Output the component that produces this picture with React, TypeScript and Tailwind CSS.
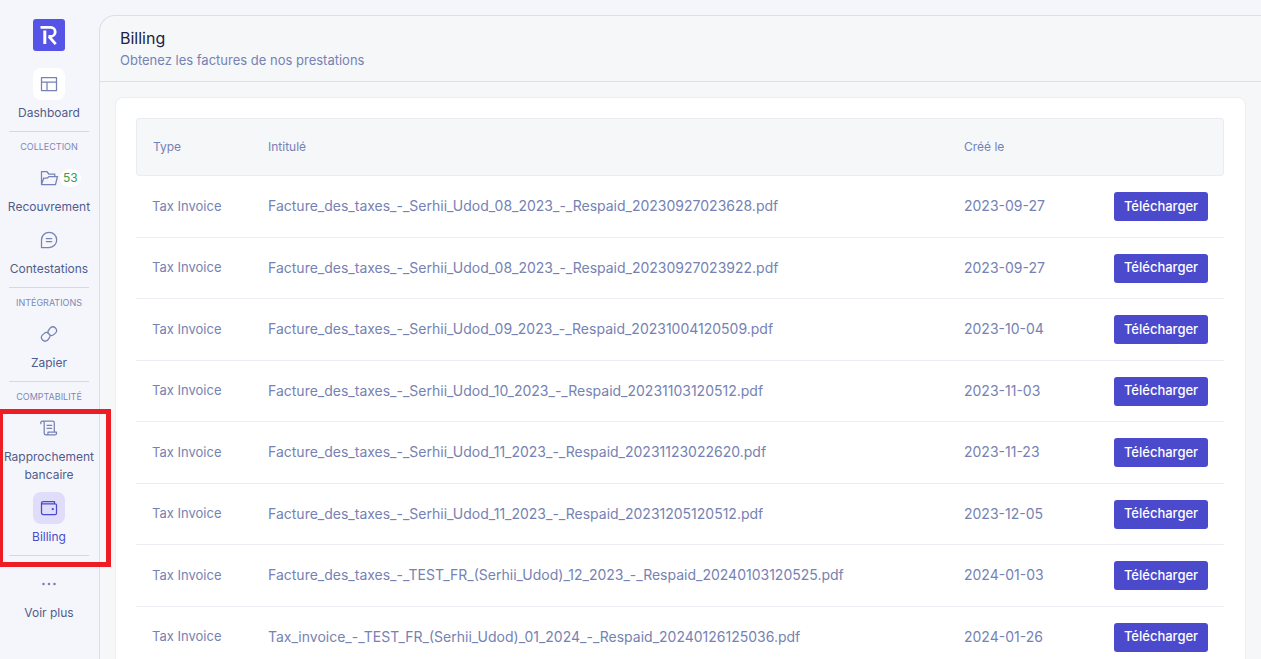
import type { ReactNode } from "react";

const invoices = [
  { type: "Tax Invoice", title: "Facture_des_taxes_-_Serhii_Udod_08_2023_-_Respaid_20230927023628.pdf", date: "2023-09-27" },
  { type: "Tax Invoice", title: "Facture_des_taxes_-_Serhii_Udod_08_2023_-_Respaid_20230927023922.pdf", date: "2023-09-27" },
  { type: "Tax Invoice", title: "Facture_des_taxes_-_Serhii_Udod_09_2023_-_Respaid_20231004120509.pdf", date: "2023-10-04" },
  { type: "Tax Invoice", title: "Facture_des_taxes_-_Serhii_Udod_10_2023_-_Respaid_20231103120512.pdf", date: "2023-11-03" },
  { type: "Tax Invoice", title: "Facture_des_taxes_-_Serhii_Udod_11_2023_-_Respaid_20231123022620.pdf", date: "2023-11-23" },
  { type: "Tax Invoice", title: "Facture_des_taxes_-_Serhii_Udod_11_2023_-_Respaid_20231205120512.pdf", date: "2023-12-05" },
  { type: "Tax Invoice", title: "Facture_des_taxes_-_TEST_FR_(Serhii_Udod)_12_2023_-_Respaid_20240103120525.pdf", date: "2024-01-03" },
  { type: "Tax Invoice", title: "Tax_invoice_-_TEST_FR_(Serhii_Udod)_01_2024_-_Respaid_20240126125036.pdf", date: "2024-01-26" },
];

function Icon({ children }: { children: ReactNode }) {
  return (
    <svg
      className="size-5 shrink-0"
      viewBox="0 0 20 20"
      fill="none"
      stroke="currentColor"
      strokeWidth="1.25"
      strokeLinecap="round"
      strokeLinejoin="round"
      aria-hidden="true"
    >
      {children}
    </svg>
  );
}

const LayoutIcon = () => (
  <Icon>
    <path d="M2.5 3.5h15v13h-15zM2.5 8h15M8 8v8.500" />
  </Icon>
);

const FolderIcon = () => (
  <Icon>
    <path d="M2.500 16.500v-13h5.300l2 2.500h6v2.500M2.500 16.500l2.200-6.500h3.600l1.800-1.500h8.400l-2 8z" />
  </Icon>
);

const ChatIcon = () => (
  <Icon>
    <path d="M2.500 17.500v-7.600a7.600 7.600 0 1 1 7.600 7.600zM7.300 8.600h5.400M7.300 11.500h5.400" />
  </Icon>
);

const LinkIcon = () => (
  <Icon>
    <path d="M8.800 9C8.800 7.500 9.200 6.500 10.100 5.500L11.500 3.700a3.700 3.700 0 0 1 5.200 5.200L15 10.400a3.600 3.600 0 0 1-5 0" />
    <path d="M11.200 11C11.200 12.500 10.800 13.500 9.900 14.500L8.500 16.300a3.700 3.700 0 0 1-5.200-5.200L5 9.600a3.600 3.600 0 0 1 5 0" />
  </Icon>
);

const ScrollIcon = () => (
  <Icon>
    <path d="M1.800 5.700v-1a1.700 1.700 0 0 1 3.400 0v10.600a1.600 1.600 0 0 0 1.600 1.600h9.200a1.500 1.500 0 0 0 1.500-1.500v-1.200H9v1.100a1.600 1.600 0 0 1-2 1.600M3.500 3h10.200a1.600 1.600 0 0 1 1.600 1.600v9.600M8 7.300h4.700M8 10.300h4.700" />
  </Icon>
);

const WalletIcon = () => (
  <Icon>
    <path d="M15.500 5.800V3.500H4.200a1.700 1.700 0 0 0-1.700 1.700v9.600a1.700 1.700 0 0 0 1.700 1.700h12a1.300 1.300 0 0 0 1.300-1.300V7.100a1.300 1.300 0 0 0-1.300-1.300H3.200" />
    <circle cx="13.800" cy="11" r=".5" fill="currentColor" />
  </Icon>
);

const DotsIcon = () => (
  <Icon>
    <g fill="currentColor" stroke="none">
      <circle cx="4.500" cy="10" r="1.300" />
      <circle cx="10" cy="10" r="1.300" />
      <circle cx="15.500" cy="10" r="1.300" />
    </g>
  </Icon>
);

function Logo() {
  return (
    <a href="#" aria-label="Respaid" className="block size-8 overflow-hidden rounded-[3px]">
      <svg viewBox="0 0 32 32" className="size-8" aria-hidden="true">
        <rect width="32" height="32" fill="#5654e6" />
        <g fill="none" stroke="#fff" strokeWidth="2.800">
          <path d="M7.500 8.400h10.200a4.500 4.500 0 0 1 0 9h-2.200" />
          <path d="M11.800 11.500V25" strokeWidth="3" />
          <path d="M16 17.500l6.700 7.600" />
        </g>
      </svg>
    </a>
  );
}

type NavItemProps = {
  icon: ReactNode;
  label: string;
  tile?: string;
  active?: boolean;
  badge?: string;
};

function NavItem({ icon, label, tile = "", active = false, badge }: NavItemProps) {
  return (
    <a
      href="#"
      aria-current={active ? "page" : undefined}
      className={`flex w-full flex-col items-center gap-1 text-center text-[12px] leading-[18px] ${active ? "text-[#4a4acb]" : "text-[#515c8c]"}`}
    >
      <span className={`relative flex size-8 items-center justify-center rounded-lg ${active ? "" : "text-[#7582b3]"} ${tile}`}>
        {icon}
        {badge && (
          <span className="absolute left-[27px] top-[7px] rounded-full bg-white px-[3px] text-[12px] leading-[18px] text-[#3c9a45]">
            {badge}
          </span>
        )}
      </span>
      <span>{label}</span>
    </a>
  );
}

function Section({ title, children }: { title?: string; children: ReactNode }) {
  return (
    <div className="mt-[9px] w-full">
      <hr className="mx-[9px] border-[#d5d8e0]" />
      {title ? (
        <h2 className="flex h-[30px] items-center justify-center text-[9px] text-[#7c88b8]">{title}</h2>
      ) : (
        <div className="h-3" />
      )}
      <div className="flex flex-col items-center gap-2">{children}</div>
    </div>
  );
}

function Sidebar() {
  return (
    <nav aria-label="Menu principal" className="relative z-10 flex w-[98px] shrink-0 flex-col items-center pt-[19px]">
      <Logo />
      <div className="mt-[17px] w-full">
        <NavItem icon={<LayoutIcon />} label="Dashboard" tile="bg-white" />
      </div>
      <Section title="COLLECTION">
        <NavItem icon={<FolderIcon />} label="Recouvrement" badge="53" />
        <NavItem icon={<ChatIcon />} label="Contestations" />
      </Section>
      <Section title="INTÉGRATIONS">
        <NavItem icon={<LinkIcon />} label="Zapier" />
      </Section>
      <Section title="COMPTABILITÉ">
        <NavItem icon={<ScrollIcon />} label="Rapprochement bancaire" />
        <NavItem icon={<WalletIcon />} label="Billing" tile="bg-[#e0ddfa]" active />
      </Section>
      <Section>
        <NavItem icon={<DotsIcon />} label="Voir plus" />
      </Section>
      <div className="pointer-events-none absolute -left-0.5 top-[409px] h-[158px] w-[113px] border-[5px] border-[#ee1c25]" />
    </nav>
  );
}

function InvoiceTable() {
  return (
    <table className="w-full table-fixed border-separate border-spacing-0 text-left text-[#7582b3]">
      <colgroup>
        <col className="w-[116px]" />
        <col />
        <col className="w-[150px]" />
        <col className="w-[126px]" />
      </colgroup>
      <thead>
        <tr className="h-[58px] text-[12px] [&>th]:border-y [&>th]:border-[#e9ecf1] [&>th]:bg-[#f6f7f9] [&>th]:px-4 [&>th]:font-normal">
          <th scope="col" className="rounded-l border-l">Type</th>
          <th scope="col">Intitulé</th>
          <th scope="col">Créé le</th>
          <th scope="col" className="rounded-r border-r" aria-label="Actions" />
        </tr>
      </thead>
      <tbody>
        {invoices.map((invoice) => (
          <tr
            key={invoice.title}
            className="odd:h-[62px] even:h-[61px] [&>td]:whitespace-nowrap [&>td]:border-b [&>td]:border-[#ecedf4] [&>td]:px-4"
          >
            <td className="text-[13px]">{invoice.type}</td>
            <td className="pb-0.5 text-[14px]">{invoice.title}</td>
            <td className="pb-0.5 text-[14px]">{invoice.date}</td>
            <td>
              <button type="button" className="block h-[29px] w-full rounded-[3px] bg-[#4b4acd] text-[13px] font-medium text-white">
                Télécharger
              </button>
            </td>
          </tr>
        ))}
      </tbody>
    </table>
  );
}

export default function App() {
  return (
    <div className="flex h-screen overflow-hidden bg-[#f5f6fb] font-['Inter','Liberation_Sans',sans-serif]">
      <Sidebar />
      <main className="ml-px mt-[15px] flex min-w-0 flex-1 flex-col rounded-tl-2xl border-l border-t border-[#dcdfe9] bg-[#f6f7f9]">
        <header className="border-b border-[#dcdfe5] px-5 pb-[10px] pt-[11px]">
          <h1 className="text-[16px] leading-[22px] text-[#1d2340]">Billing</h1>
          <p className="text-[13px] leading-[22px] text-[#7582b3]">Obtenez les factures de nos prestations</p>
        </header>
        <section className="mx-[15px] mt-[15px] rounded-lg border border-[#eceef3] bg-white py-5 pl-5 pr-[21px]">
          <InvoiceTable />
        </section>
      </main>
    </div>
  );
}
